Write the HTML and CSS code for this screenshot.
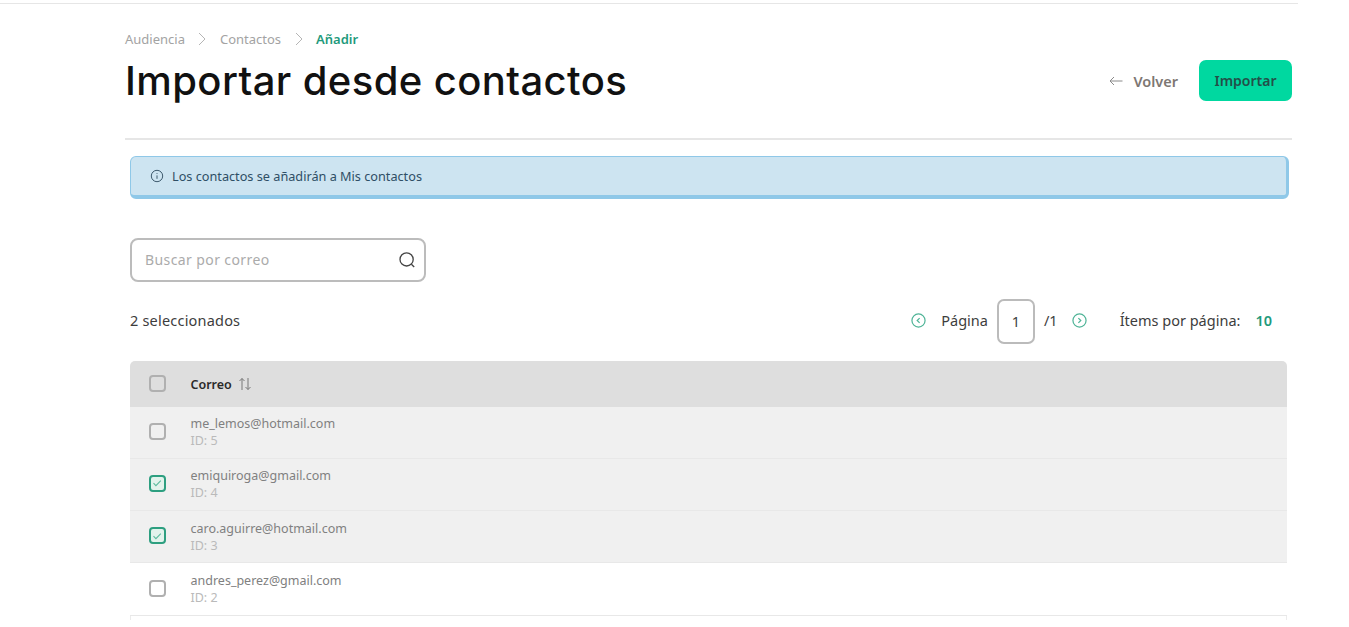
FILE: index.html
```html
<!DOCTYPE html>
<html lang="es">
<head>
<meta charset="utf-8">
<title>Importar desde contactos</title>
<link rel="stylesheet" href="styles.css">
</head>
<body>
<div class="topline"></div>
<main class="page">
  <nav class="crumbs">
    <span>Audiencia</span>
    <svg class="crumb-sep" viewBox="0 0 8 14"><path d="M1 1l6 6-6 6"/></svg>
    <span>Contactos</span>
    <svg class="crumb-sep" viewBox="0 0 8 14"><path d="M1 1l6 6-6 6"/></svg>
    <span class="crumb-active">Añadir</span>
  </nav>
  <header class="head">
    <h1>Importar desde contactos</h1>
    <div class="actions">
      <a class="back"><svg viewBox="0 0 14 10"><path d="M13.5 5H1M5 1L1 5l4 4"/></svg>Volver</a>
      <button class="primary">Importar</button>
    </div>
  </header>
  <div class="content">
    <div class="alert">
      <svg viewBox="0 0 14 14"><circle cx="7" cy="7" r="5.7"/><path d="M7 6.4v3.4M7 4.2v.8"/></svg>
      <span>Los contactos se añadirán a Mis contactos</span>
    </div>
    <div class="search">
      <span>Buscar por correo</span>
      <svg viewBox="0 0 18 18"><circle cx="8.6" cy="8.4" r="6.6"/><path d="M13.4 13.2l2.8 2.8"/></svg>
    </div>
    <div class="toolbar">
      <span class="selected">2 seleccionados</span>
      <div class="pager">
        <svg class="pg-icon" viewBox="0 0 16 16"><circle cx="8" cy="8" r="7"/><path d="M9.2 5.4L6.6 8l2.6 2.6"/></svg>
        <span class="pg-label">Página</span>
        <span class="pg-box">1</span>
        <span class="pg-total">/1</span>
        <svg class="pg-icon" viewBox="0 0 16 16"><circle cx="8" cy="8" r="7"/><path d="M6.8 5.4L9.4 8l-2.6 2.6"/></svg>
        <span class="pg-items">Ítems por página:</span>
        <span class="pg-count">10</span>
      </div>
    </div>
    <div class="table">
      <div class="row-head">
        <span class="check"></span>
        <span class="col-title">Correo</span>
        <svg class="sort" viewBox="0 0 14 14"><path d="M4 13V1.5M1.5 4L4 1.5 6.500 4M10 1v11.500M7.500 10l2.500 2.500 2.500-2.500"/></svg>
      </div>
      <div class="row shaded">
        <span class="check"></span>
        <div class="cell"><span class="email">me_lemos@hotmail.com</span><span class="id">ID: 5</span></div>
      </div>
      <div class="row shaded">
        <span class="check on"><svg viewBox="0 0 12 12"><path d="M2.500 6.200l2.400 2.400L9.800 3.600"/></svg></span>
        <div class="cell"><span class="email">emiquiroga@gmail.com</span><span class="id">ID: 4</span></div>
      </div>
      <div class="row shaded">
        <span class="check on"><svg viewBox="0 0 12 12"><path d="M2.500 6.200l2.400 2.400L9.800 3.600"/></svg></span>
        <div class="cell"><span class="email">caro.aguirre@hotmail.com</span><span class="id">ID: 3</span></div>
      </div>
      <div class="row">
        <span class="check"></span>
        <div class="cell"><span class="email">andres_perez@gmail.com</span><span class="id">ID: 2</span></div>
      </div>
      <div class="row-tail"></div>
    </div>
  </div>
</main>
</body>
</html>
```
FILE: styles.css
```css
* { box-sizing: border-box; }
html, body { margin: 0; height: 627px; overflow: hidden; background: #fff; }
body { font-family: "Noto Sans", "Open Sans", sans-serif; color: #333; padding-top: 3px; }
.topline { width: 1298px; height: 1px; background: #e6e6e6; }
.page { width: 1292px; padding-left: 125px; }

.crumbs { display: flex; align-items: center; height: 18px; margin-top: 26px; font-size: 13px; color: #a3a3a3; }
.crumb-sep { width: 8px; height: 14px; margin: 0 13.500px; fill: none; stroke: #b5b5b5; stroke-width: 1; }
.crumb-active { color: #1f9a7c; font-weight: 600; }

.head { display: flex; justify-content: space-between; align-items: center; height: 71px; padding-bottom: 6px; }
h1 { margin: 0; font-family: Inter, sans-serif; font-size: 40px; font-weight: 500; color: #111; letter-spacing: 0.4px; line-height: 46px; }
.actions { display: flex; align-items: center; }
.back { display: flex; align-items: center; font-size: 14.500px; font-weight: 600; color: #7d7773; margin-right: 21px; }
.back svg { width: 14px; height: 10px; margin-right: 10px; fill: none; stroke: #8a8a8a; stroke-width: 1; }
.primary { width: 93px; height: 41px; border: 0; border-radius: 7px; background: #00d8a0; color: #235049; font-family: inherit; font-size: 14px; font-weight: 600; padding: 0; }

.content { border-top: 2px solid #e6e6e6; margin-top: 19px; padding: 16px 5px 0; }

.alert { display: flex; align-items: center; width: 1159px; height: 43px; padding: 0 0 0 19px; background: #cde4f1; border: 2px solid #8fc8e8; border-width: 1px 3px 4px 1px; border-radius: 6px; font-size: 12.700px; color: #2f4f66; }
.alert svg { width: 14px; height: 14px; margin-right: 8px; fill: none; stroke: #3e5a6e; stroke-width: 1; }

.search { display: flex; justify-content: space-between; align-items: center; width: 296px; height: 44px; margin-top: 39px; padding: 0 8px 1px 13px; border: 2px solid #bcbcbc; border-radius: 8px; font-size: 14px; color: #ababab; letter-spacing: 0.4px; }
.search svg { width: 18px; height: 18px; fill: none; stroke: #444; stroke-width: 1.300; }

.toolbar { display: flex; justify-content: space-between; align-items: center; width: 1142px; height: 46px; margin-top: 15px; font-size: 14.500px; color: #3d3d3d; }
.selected { letter-spacing: 0.2px; }
.pager { display: flex; align-items: center; }
.pg-icon { width: 15px; height: 15px; fill: none; stroke: #4fb497; stroke-width: 1.300; }
.pg-label { margin-left: 15px; }
.pg-box { display: flex; align-items: center; justify-content: center; width: 38px; height: 45px; margin: 2px 9px 0; border: 2px solid #bbb; border-radius: 7px; }
.pg-total { margin-right: 14px; }
.pg-items { margin-left: 33px; }
.pg-count { margin-left: 15px; color: #1f9a7c; font-weight: 600; }

.table { width: 1157px; margin-top: 18px; border-radius: 5px 5px 0 0; }
.row-head { display: flex; align-items: center; height: 45.500px; padding-left: 18.500px; background: #dedede; border-radius: 5px 5px 0 0; }
.row-head .check { margin-bottom: 1px; }
.col-title { margin-left: 25px; margin-top: 2px; font-size: 12.500px; font-weight: 600; color: #2a2a2a; }
.sort { width: 14px; height: 14px; margin-left: 6px; fill: none; stroke: #777; stroke-width: 1; }
.row { display: flex; align-items: center; height: 52.300px; padding-left: 18.500px; border-bottom: 1.500px solid #e8e8e8; }
.row .check { margin-bottom: 2px; }
.shaded { background: #f0f0f0; }
.row-tail { height: 4px; border-left: 1px solid #ececec; border-right: 1px solid #ececec; }
.check { display: flex; align-items: center; justify-content: center; width: 17px; height: 17px; border: 2px solid #b0b0b0; border-radius: 4px; flex: none; }
.check.on { border: 2px solid #2d9f80; background: #e2f3ec; }
.check svg { width: 12px; height: 12px; fill: none; stroke: #5cbb9e; stroke-width: 1.100; }
.cell { display: flex; flex-direction: column; margin-left: 25px; }
.email { font-size: 12.500px; line-height: 17px; color: #808080; }
.id { font-size: 12.500px; line-height: 17px; color: #bababa; }
```
